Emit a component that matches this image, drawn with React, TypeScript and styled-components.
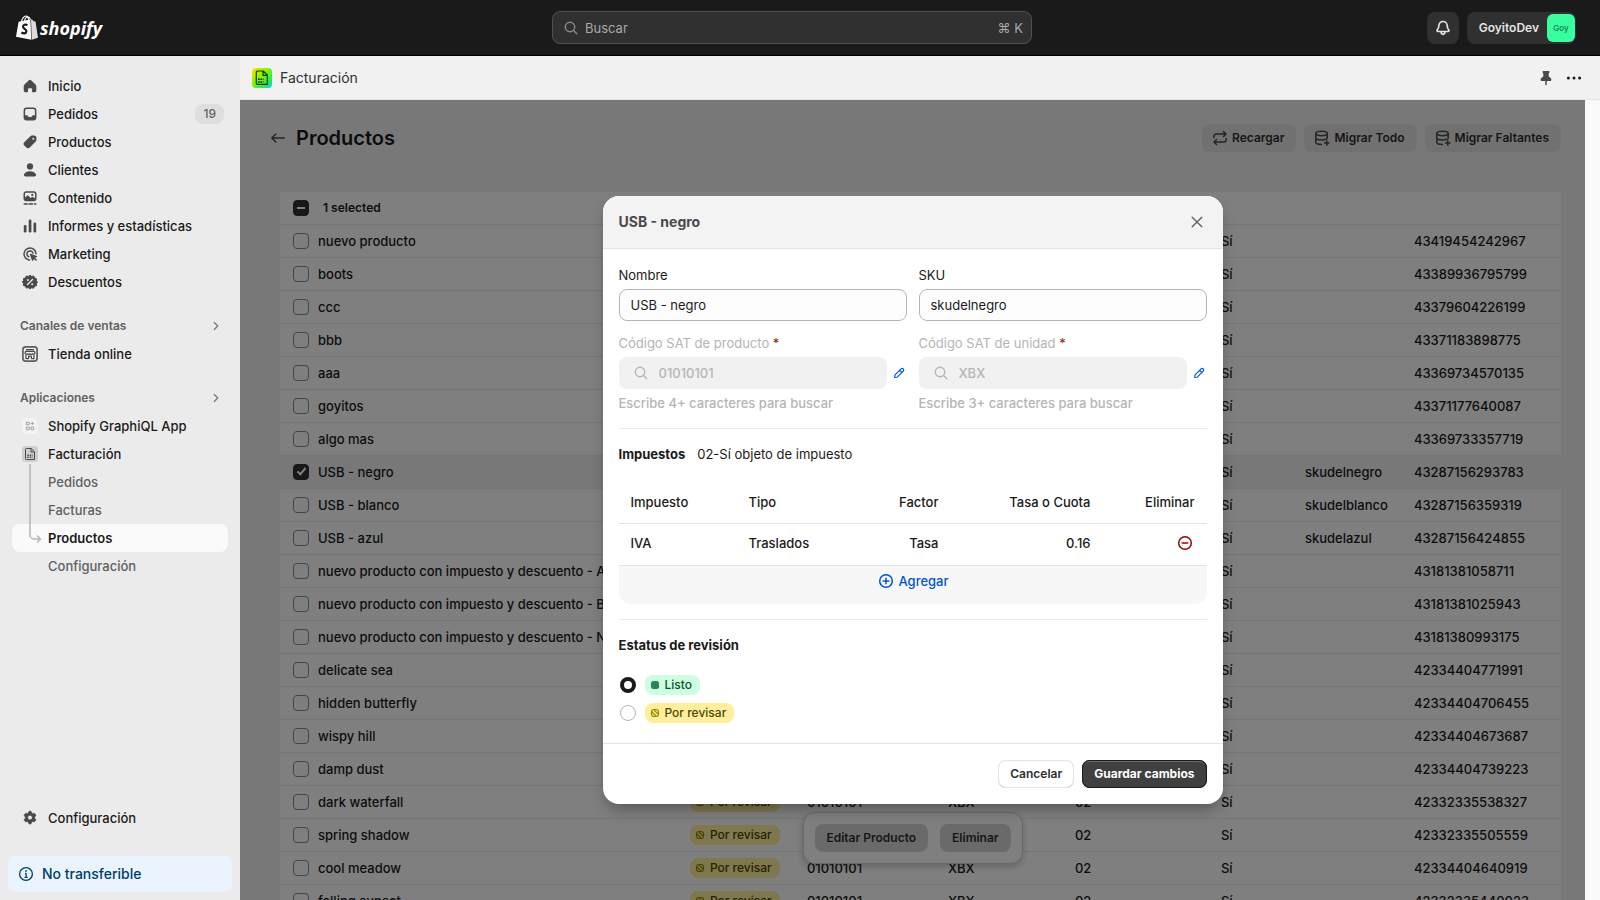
import React from "react";
import styled, { createGlobalStyle, css } from "styled-components";

const GlobalStyle = createGlobalStyle`
  *, *::before, *::after { box-sizing: border-box; }
  html, body, #root { height: 100%; }
  body {
    margin: 0;
    font-family: Inter, "Liberation Sans", sans-serif;
    font-size: 13px;
    line-height: 20px;
    color: #1a1a1a;
    background: #1a1a1a;
    overflow: hidden;
    -webkit-font-smoothing: antialiased;
  }
  button, input { font: inherit; color: inherit; }
  a { color: inherit; text-decoration: none; }
  h1, h2, h3, p { margin: 0; }
`;

/* ---------- Icons (20px grid) ---------- */

type IconName =
  | "home" | "orders" | "products" | "customers" | "content" | "analytics"
  | "marketing" | "discounts" | "settings" | "chevron" | "search" | "bell"
  | "pin" | "dots" | "back" | "refresh" | "database" | "close" | "pencil"
  | "plus" | "minus" | "info" | "store" | "apps" | "invoice";

const stroke = {
  fill: "none",
  stroke: "currentColor",
  strokeWidth: 1.5,
  strokeLinecap: "round" as const,
  strokeLinejoin: "round" as const,
};

const shapes: Record<IconName, React.ReactNode> = {
  home: (
    <path fill="currentColor" d="M8.900 4.300a1.600 1.600 0 0 1 2.200 0l4.200 3.900c.6.600 1 1.400 1 2.200v4.100c0 1-.8 1.800-1.800 1.800h-1.700a.7.700 0 0 1-.7-.7v-2.300a1 1 0 0 0-1-1H9a1 1 0 0 0-1 1v2.300c0 .4-.3.700-.7.700H5.500a1.800 1.800 0 0 1-1.800-1.800v-4.100c0-.8.400-1.600 1-2.200z" />
  ),
  orders: (
    <path fill="currentColor" fillRule="evenodd" d="M6.600 3.600h6.800a3 3 0 0 1 3 3v6.800a3 3 0 0 1-3 3H6.600a3 3 0 0 1-3-3V6.600a3 3 0 0 1 3-3zm0 1.500A1.500 1.500 0 0 0 5.100 6.600v4.700h1.700c.5 0 .9.200 1.100.6l.5.800c.1.200.4.400.7.400h1.800c.3 0 .6-.2.7-.4l.5-.8c.2-.4.6-.6 1.100-.6h1.700V6.600a1.500 1.500 0 0 0-1.500-1.500z" />
  ),
  products: (
    <path fill="currentColor" fillRule="evenodd" d="M10.400 4.300c.4-.4 1-.7 1.600-.7h2.200c1.200 0 2.200 1 2.200 2.200V8c0 .6-.2 1.200-.7 1.600l-5.900 6c-1 1-2.500 1-3.400 0L4.300 13.600c-1-1-1-2.400 0-3.400zM13.300 7.700a1 1 0 1 0 0-2 1 1 0 0 0 0 2z" />
  ),
  customers: (
    <path fill="currentColor" d="M10 9.500a3.100 3.100 0 1 0 0-6.200 3.100 3.100 0 0 0 0 6.200zM10 11.300c-2.700 0-5 1.200-5.900 2.900-.6 1.200.2 2.300 1.500 2.300h8.800c1.300 0 2.100-1.100 1.500-2.300-.9-1.700-3.200-2.900-5.900-2.900z" />
  ),
  content: (
    <>
      <path fill="currentColor" fillRule="evenodd" d="M6.200 3.200h7.600a2.700 2.700 0 0 1 2.700 2.700v4.700a2.700 2.700 0 0 1-2.700 2.700H6.200a2.700 2.700 0 0 1-2.700-2.700V5.900a2.700 2.700 0 0 1 2.700-2.700zm0 1.500A1.200 1.200 0 0 0 5 5.900v3.500l2-1.600c.4-.3.900-.3 1.300 0l2.500 2.200 1.100-.9c.3-.3.8-.3 1.200 0l1.900 1.300V5.900a1.200 1.200 0 0 0-1.200-1.200zM12.300 8a1.100 1.100 0 1 0 0-2.200 1.100 1.100 0 0 0 0 2.200z" />
      <path {...stroke} d="M4.200 16h3M9 16h3.500M14.500 16h1.300" />
    </>
  ),
  analytics: (
    <g fill="currentColor">
      <rect x="3.800" y="9" width="2.700" height="7.500" rx="1.200" />
      <rect x="8.700" y="3.500" width="2.700" height="13" rx="1.200" />
      <rect x="13.500" y="6.500" width="2.700" height="10" rx="1.200" />
    </g>
  ),
  marketing: (
    <>
      <path {...stroke} d="M9.500 16A6 6 0 1 1 16 9.700" />
      <path {...stroke} d="M8.700 12.800A3.100 3.100 0 1 1 13 9.100" />
      <path fill="currentColor" d="M9.900 10.600c-.2-.5.3-1 .8-.8l6 2.100c.6.200.6 1 0 1.200l-1.700.7 1.700 1.800a.7.700 0 0 1-1 1l-1.800-1.700-.7 1.700c-.2.600-1 .6-1.200 0z" />
    </>
  ),
  discounts: (
    <>
      <path fill="currentColor" stroke="currentColor" strokeLinejoin="round" d="M10 3.200l1.700 1.300 2-.5.8 2 2 .7-.2 2.100 1.300 1.200-1.200 1.600.1 2.100-2.100.6-.8 1.900-2-.5L10 16.900l-1.700-1.300-2 .5-.8-1.900-2.100-.6.1-2.100L2.400 10l1.200-1.400-.1-2 2-.6.8-2 2 .5z" />
      <path d="M7.500 12.500l5-5" stroke="#ebebeb" strokeWidth="1.400" strokeLinecap="round" />
      <circle cx="7.900" cy="8" r="1" fill="#ebebeb" />
      <circle cx="12.200" cy="12.200" r="1" fill="#ebebeb" />
    </>
  ),
  settings: (
    <path fill="currentColor" fillRule="evenodd" stroke="currentColor" strokeWidth=".8" strokeLinejoin="round" d="M8.600 4.100c.1-.6.5-.9 1-.9h.8c.5 0 .9.300 1 .9l.2 1 1.100.6 1-.3c.5-.2 1 0 1.300.5l.6 1c.3.400.2 1-.2 1.300l-.8.700v1.300l.8.700c.4.300.5.900.2 1.300l-.6 1c-.3.500-.8.700-1.300.5l-1-.3-1.100.6-.2 1c-.1.600-.5.900-1 .9h-.8c-.5 0-.9-.3-1-.9l-.2-1-1.100-.6-1 .3c-.5.200-1 0-1.300-.5l-.6-1c-.3-.4-.2-1 .2-1.300l.8-.7V8.900l-.8-.7c-.4-.3-.5-.9-.2-1.300l.6-1c.3-.5.8-.7 1.300-.5l1 .3 1.100-.6zM10 12a2.400 2.400 0 1 0 0-4.800A2.400 2.400 0 0 0 10 12z" />
  ),
  chevron: <path {...stroke} strokeWidth={1.300} d="M8.300 6.500l3.500 3.500-3.500 3.500" />,
  search: (
    <>
      <circle cx="9" cy="9" r="4.700" {...stroke} strokeWidth={1.400} />
      <path {...stroke} strokeWidth={1.400} d="M12.500 12.500l3.300 3.300" />
    </>
  ),
  bell: (
    <path {...stroke} strokeWidth={1.700} d="M10 3.500a4.200 4.200 0 0 0-4.200 4.200c0 2.300-.6 3.200-1.500 4.200-.6.700-.2 1.600.7 1.600h10c.9 0 1.300-.9.700-1.600-.9-1-1.500-1.900-1.500-4.200A4.200 4.200 0 0 0 10 3.500zM8 13.800c.1 1.700.9 2.500 2 2.500s1.900-.8 2-2.500" />
  ),
  pin: (
    <>
      <path fill="currentColor" d="M7.500 3h5c.6 0 1 .4 1 1s-.4 1.200-.8 1.500v3l2 1.600c.5.500.6 1 .6 1.800 0 .6-.4 1-1 1H5.700c-.6 0-1-.4-1-1 0-.8.1-1.300.6-1.800l2-1.600v-3C6.900 5.200 6.500 4.600 6.500 4s.4-1 1-1z" />
      <path {...stroke} d="M10 12.500v4" />
    </>
  ),
  dots: (
    <g fill="currentColor">
      <circle cx="4.400" cy="10" r="1.500" />
      <circle cx="10" cy="10" r="1.500" />
      <circle cx="15.600" cy="10" r="1.500" />
    </g>
  ),
  back: <path {...stroke} d="M16.200 10H4M7.800 6L3.800 10l4 4" />,
  refresh: (
    <>
      <path {...stroke} d="M3.800 9.500V8.500a2.500 2.500 0 0 1 2.500-2.500h9.500M13.500 3.500L16 6l-2.500 2.500" />
      <path {...stroke} d="M16.200 10.500v1a2.500 2.500 0 0 1-2.500 2.500H4.200M6.500 11.500L4 14l2.500 2.500" />
    </>
  ),
  database: (
    <>
      <ellipse cx="9.500" cy="5.500" rx="5.700" ry="2.200" {...stroke} />
      <path {...stroke} d="M3.800 5.500v8.700c0 1.200 2.400 2.200 5.500 2.200M15.200 5.500v5M3.800 9.800c0 1.200 2.500 2.200 5.700 2.200 2 0 3.600-.3 4.700-.9M14.800 12.800v4.400M12.600 15h4.400" />
    </>
  ),
  close: <path {...stroke} strokeWidth={1.400} d="M5.200 5.200l9.600 9.600M14.800 5.200l-9.600 9.600" />,
  pencil: (
    <path {...stroke} d="M12.600 4.900a1.900 1.900 0 0 1 2.700 2.700l-7.200 7.200c-.3.300-.6.400-1 .5l-2.500.3.300-2.500c0-.4.200-.7.500-1zM10.900 6.800l2.500 2.500" />
  ),
  plus: (
    <>
      <circle cx="10" cy="10" r="6.300" {...stroke} />
      <path {...stroke} d="M10 7.200v5.600M7.200 10h5.600" />
    </>
  ),
  minus: (
    <>
      <circle cx="10" cy="10" r="6.300" {...stroke} />
      <path {...stroke} d="M7.200 10h5.600" />
    </>
  ),
  info: (
    <>
      <circle cx="10" cy="10" r="6.400" {...stroke} strokeWidth={1.300} />
      <path {...stroke} strokeWidth={1.300} d="M9.500 9.300h.6v4M9 13.300h2.200" />
      <circle cx="10" cy="6.900" r=".9" fill="currentColor" />
    </>
  ),
  store: (
    <>
      <rect x="2.900" y="2.900" width="14.200" height="14.200" rx="2.800" fill="#f1f1f1" stroke="#5c5f62" strokeWidth="1.700" />
      <path fill="none" stroke="#4a4a4a" strokeWidth="1.200" strokeLinejoin="round" d="M6 5.600h8M5.500 7.300h9l.5 2c0 1-1.500 1.400-2.200.3-.7 1.100-2.100 1.100-2.800 0-.7 1.100-2.100 1.100-2.800 0-.7 1.100-2.200.7-2.200-.3zM6 11v3.600h2.600v-2.400h2.800v2.400H14V11" />
    </>
  ),
  apps: (
    <>
      <rect x="2" y="2" width="16" height="16" rx="4" fill="#f3f3f3" />
      <g fill="none" stroke="#a6a6a6" strokeWidth="1.100">
        <rect x="6.300" y="6.300" width="3" height="2.500" rx=".6" />
        <rect x="6.300" y="11" width="3" height="2.700" rx=".6" />
        <rect x="11" y="11" width="2.700" height="2.700" rx=".6" />
        <path d="M12.400 5.900v3.200M10.800 7.500H14" />
      </g>
    </>
  ),
  invoice: (
    <>
      <rect x="2" y="2" width="16" height="16" rx="3.500" fill="#cecece" />
      <path fill="none" stroke="#4a4a4a" strokeWidth="1" d="M6.300 4.500h4.900l3.300 3.300v7.700H6.300c-.5 0-.8-.3-.8-.8V5.300c0-.5.3-.8.8-.8zM11 4.500V8h3.500" />
      <path stroke="#4a4a4a" strokeWidth="1.400" strokeDasharray="1.500 1" d="M7.300 11.200h5.500M7.300 13.300h5.500" />
    </>
  ),
};

const Svg = styled.svg<{ $size: number }>`
  display: block;
  flex: none;
  width: ${(p) => p.$size}px;
  height: ${(p) => p.$size}px;
`;

const Icon = ({ name, size = 20 }: { name: IconName; size?: number }) => (
  <Svg viewBox="0 0 20 20" $size={size} aria-hidden="true">
    {shapes[name]}
  </Svg>
);

/* ---------- Shell ---------- */

const Shell = styled.div`
  display: flex;
  flex-direction: column;
  height: 100vh;
`;

const TopBar = styled.header`
  display: grid;
  grid-template-columns: 1fr minmax(200px, 480px) 1fr;
  align-items: center;
  flex: none;
  height: 56px;
  padding: 0 24px 0 8px;
  background: #1a1a1a;
  border-bottom: 1px solid #000;
`;

const Logo = styled.a`
  display: flex;
  align-items: center;
  gap: 2px;
  padding-left: 8px;
  color: #fff;
  font: italic 700 18px/24px "Open Sans", sans-serif;
`;

const LogoBag = styled.svg`
  width: 22px;
  height: 25px;
`;

const SearchButton = styled.button`
  display: flex;
  align-items: center;
  gap: 4px;
  height: 33px;
  padding: 0 8px;
  background: #303030;
  border: 1px solid #4f4f4f;
  border-radius: 8px;
  color: #a8a8a8;
  text-align: left;
  svg { color: #8a8a8a; }
  span:first-of-type { flex: 1; }
`;

const Account = styled.div`
  display: flex;
  justify-content: flex-end;
  gap: 8px;
`;

const DarkButton = styled.button<{ $square?: boolean }>`
  display: flex;
  align-items: center;
  justify-content: center;
  gap: 8px;
  height: 32px;
  width: ${(p) => (p.$square ? "32px" : "auto")};
  padding: ${(p) => (p.$square ? "0" : "0 1px 0 12px")};
  border: 0;
  border-radius: 8px;
  background: #303030;
  color: #e3e3e3;
  font-size: 12px;
  font-weight: 600;
`;

const Avatar = styled.span`
  display: grid;
  place-items: center;
  width: 28px;
  height: 28px;
  border-radius: 6px;
  background: #3afda0;
  color: #137a4b;
  font-size: 8px;
  font-weight: 500;
`;

const Workspace = styled.div`
  display: flex;
  flex: 1;
  min-height: 0;
`;

/* ---------- Sidebar ---------- */

const Sidebar = styled.nav`
  display: flex;
  flex-direction: column;
  flex: none;
  width: 240px;
  background: #ebebeb;
`;

const NavGroup = styled.div<{ $bottom?: boolean }>`
  padding: ${(p) => (p.$bottom ? "0 12px 24px" : "16px 12px 0")};
  margin-top: ${(p) => (p.$bottom ? "auto" : "0")};
`;

const NavLink = styled.a<{ $active?: boolean; $sub?: boolean }>`
  display: flex;
  align-items: center;
  gap: 8px;
  height: 28px;
  padding: 0 4px 0 ${(p) => (p.$sub ? "36px" : "8px")};
  border-radius: 8px;
  color: ${(p) => (p.$sub && !p.$active ? "#616161" : "#1a1a1a")};
  font-weight: ${(p) => (p.$active ? 600 : p.$sub ? 450 : 500)};
  ${(p) => p.$active && css`background: #fafafa;`}
  svg { color: #4a4a4a; }
`;

const Count = styled.span`
  margin-left: auto;
  padding: 0 8px;
  border-radius: 8px;
  background: #dedede;
  color: #616161;
  font-size: 12px;
`;

const SectionButton = styled.button`
  display: flex;
  align-items: center;
  justify-content: space-between;
  width: 100%;
  height: 28px;
  margin-top: 16px;
  padding: 0 2px 0 8px;
  border: 0;
  background: none;
  color: #616161;
  font-size: 12px;
  font-weight: 600;
  svg { color: #7a7a7a; }
`;

const SubNav = styled.div`
  position: relative;
`;

const Branch = styled.svg`
  position: absolute;
  left: 14px;
  top: -4px;
  width: 16px;
  height: 84px;
  z-index: 1;
  pointer-events: none;
`;

const Notice = styled.div`
  display: flex;
  align-items: center;
  gap: 6px;
  flex: none;
  height: 36px;
  margin: 0 8px 8px;
  padding: 0 8px;
  border-radius: 8px;
  background: #eaf4ff;
  color: #003d6b;
  font-size: 14px;
  font-weight: 500;
`;

/* ---------- Embedded app ---------- */

const AppArea = styled.div`
  display: flex;
  flex-direction: column;
  flex: 1;
  min-width: 0;
  background: #fafafa;
`;

const AppBar = styled.div`
  display: flex;
  align-items: center;
  gap: 8px;
  flex: none;
  height: 44px;
  padding: 0 16px 0 12px;
  background: #f1f1f1;
  border-bottom: 1px solid #e6e6e6;
  color: #303030;
  font-size: 14px;
`;

const AppBadge = styled.svg`
  width: 20px;
  height: 20px;
`;

const IconButton = styled.button<{ $push?: boolean; $small?: boolean; $tone?: string }>`
  display: grid;
  place-items: center;
  flex: none;
  width: ${(p) => (p.$small ? "16px" : "20px")};
  height: 20px;
  padding: 0;
  margin-left: ${(p) => (p.$push ? "auto" : "0")};
  border: 0;
  background: none;
  color: ${(p) => p.$tone || "#4a4a4a"};
`;

const Frame = styled.div`
  position: relative;
  display: grid;
  flex: 1;
  min-height: 0;
  margin-right: 15px;
  overflow: hidden;
`;

const Page = styled.main`
  padding: 24px 24px 0 28px;
  background: #f1f1f1;
  overflow: hidden;
`;

const PageHeader = styled.div`
  display: flex;
  align-items: center;
  gap: 8px;
  margin-bottom: 40px;
  h1 {
    flex: 1;
    font-size: 20px;
    line-height: 28px;
    font-weight: 600;
  }
`;

const Button = styled.button<{ $kind?: "plain" | "primary" }>`
  display: flex;
  align-items: center;
  gap: 2px;
  height: 28px;
  padding: 0 12px;
  border: 0;
  border-radius: 8px;
  background: #e3e3e3;
  color: #303030;
  font-size: 12px;
  font-weight: 600;
  svg { margin-left: -4px; color: #4a4a4a; }
  ${(p) =>
    p.$kind === "plain" &&
    css`
      background: #fff;
      box-shadow: inset 0 0 0 1px #e3e3e3, inset 0 -1px 0 #b5b5b5;
    `}
  ${(p) =>
    p.$kind === "primary" &&
    css`
      background: #404040;
      color: #fff;
      font-weight: 700;
      box-shadow: inset 0 0 0 1px #1a1a1a, inset 0 2px 0 #6a6a6a;
    `}
`;

const TableCard = styled.table`
  width: calc(100% - 12px);
  margin-left: 12px;
  border-collapse: collapse;
  table-layout: fixed;
  background: #fff;
  td, th {
    height: 33px;
    padding: 0 6px;
    border-top: 1px solid #ebebeb;
    text-align: left;
    font-weight: 450;
    white-space: nowrap;
  }
  thead th {
    height: 32px;
    border-top: 0;
    font-size: 12px;
    font-weight: 600;
  }
  thead th:last-child { padding-left: 11px; }
  td:first-child, th:first-child { padding: 0 0 0 13px; }
`;

const Row = styled.tr<{ $selected: boolean }>`
  background: ${(p) => (p.$selected ? "#f0f0f0" : "#fff")};
`;

const Check = styled.input`
  display: block;
  appearance: none;
  width: 16px;
  height: 16px;
  margin: 0;
  border: 1px solid #8a8a8a;
  border-radius: 4px;
  background: #fdfdfd;
  &:checked, &:indeterminate {
    border-color: #303030;
    background: #303030;
  }
  &:checked::after {
    content: "";
    display: block;
    width: 5px;
    height: 9px;
    margin: 1px 0 0 5px;
    border: solid #fff;
    border-width: 0 2px 2px 0;
    transform: rotate(40deg);
  }
  &:indeterminate::after {
    content: "";
    display: block;
    width: 8px;
    height: 2px;
    margin: 6px 3px;
    background: #fff;
  }
`;

const Badge = styled.span<{ $tone: "success" | "attention" }>`
  display: inline-flex;
  align-items: center;
  gap: 4px;
  height: 20px;
  padding: 0 8px 0 4px;
  border-radius: 8px;
  background: ${(p) => (p.$tone === "success" ? "#cdfee1" : "#ffef9d")};
  color: ${(p) => (p.$tone === "success" ? "#0c5132" : "#4f4700")};
  font-size: 12px;
  font-weight: 500;
  vertical-align: middle;
`;

const Pip = styled.svg`
  width: 12px;
  height: 12px;
`;

const Status = ({ done }: { done: boolean }) => (
  <Badge $tone={done ? "success" : "attention"}>
    <Pip viewBox="0 0 12 12" aria-hidden="true">
      {done ? (
        <rect x="2" y="2" width="8" height="8" rx="2.500" fill="#29845a" />
      ) : (
        <g fill="none" stroke="#998a00" strokeWidth="1.200">
          <rect x="2.500" y="2.500" width="7" height="7" rx="2.500" />
          <path d="M3 5l4 4M5 3l4 4" />
        </g>
      )}
    </Pip>
    {done ? "Listo" : "Por revisar"}
  </Badge>
);

const BulkBar = styled.div`
  position: absolute;
  left: 50%;
  bottom: 36px;
  transform: translateX(-50%);
  display: flex;
  gap: 12px;
  padding: 11px;
  border: 1px solid #d4d4d4;
  border-radius: 12px;
  background: #fff;
  box-shadow: 0 3px 6px rgba(0, 0, 0, 0.2);
  button { background: #d4d4d4; }
`;

/* ---------- Dialog ---------- */

const Backdrop = styled.div`
  position: absolute;
  inset: 0;
  display: grid;
  place-items: center;
  background: rgba(0, 0, 0, 0.5);
`;

const Dialog = styled.section`
  width: 620px;
  max-width: calc(100% - 32px);
  border-radius: 16px;
  background: #fff;
  overflow: hidden;
  box-shadow: 0 8px 16px -4px rgba(0, 0, 0, 0.35);
`;

const DialogHeader = styled.header`
  display: flex;
  align-items: center;
  justify-content: space-between;
  height: 53px;
  padding: 0 16px;
  background: #f3f3f3;
  border-bottom: 1px solid #e3e3e3;
  h2 {
    color: #4a4a4a;
    font-size: 14px;
    font-weight: 650;
  }
`;

const DialogBody = styled.div`
  padding: 16px 16px 20px;
`;

const Fields = styled.div`
  display: grid;
  grid-template-columns: 1fr 1fr;
  gap: 12px;
`;

const Field = styled.div<{ $disabled?: boolean }>`
  display: grid;
  grid-template-columns: 1fr auto;
  align-items: center;
  gap: 4px;
  color: ${(p) => (p.$disabled ? "#b5b5b5" : "#1a1a1a")};
  label, p { grid-column: 1 / -1; }
  p { font-weight: 500; }
  em { color: #8e1f0b; font-style: normal; }
`;

const TextBox = styled.input`
  grid-column: 1 / -1;
  width: 100%;
  height: 32px;
  padding: 0 11px;
  border: 1px solid #b5b5b5;
  border-radius: 8px;
  background: #fdfdfd;
`;

const SearchBox = styled.div`
  display: flex;
  align-items: center;
  gap: 8px;
  height: 32px;
  padding: 0 12px;
  border-radius: 8px;
  background: #f1f1f1;
  input {
    width: 100%;
    min-width: 0;
    padding: 0;
    border: 0;
    background: none;
    color: #b5b5b5;
    font-weight: 500;
  }
`;

const Divider = styled.hr`
  height: 1px;
  margin: 15px 0;
  border: 0;
  background: #ebebeb;
`;

const Heading = styled.h3`
  font-size: 13px;
  font-weight: 650;
`;

const Inline = styled.div`
  display: flex;
  gap: 12px;
`;

const TaxTable = styled.table`
  width: 100%;
  margin-top: 16px;
  border-collapse: separate;
  border-spacing: 0;
  table-layout: fixed;
  th, td {
    height: 44px;
    padding: 0 12px;
    border-bottom: 1px solid #e3e3e3;
    font-weight: 450;
    text-align: right;
  }
  tbody td {
    height: 42px;
    padding-bottom: 4px;
  }
  th:nth-child(-n + 2), td:nth-child(-n + 2) { text-align: left; }
  td button { margin-left: auto; }
  tfoot td {
    height: 38px;
    padding: 0 0 8px;
    border: 0;
    border-radius: 0 0 12px 12px;
    background: #f7f7f7;
  }
`;

const AddButton = styled.button`
  display: flex;
  gap: 2px;
  align-items: center;
  width: 100%;
  justify-content: center;
  padding: 0;
  border: 0;
  background: none;
  color: #0052d6;
`;

const Choices = styled.div`
  display: grid;
  gap: 8px;
  margin-top: 20px;
`;

const Choice = styled.label`
  display: flex;
  align-items: center;
  gap: 8px;
  height: 20px;
`;

const Radio = styled.input`
  appearance: none;
  width: 16px;
  height: 16px;
  margin: 0 1px;
  border: 1px solid #b5b5b5;
  border-radius: 50%;
  background: #fdfdfd;
  &:checked { border: 4px solid #1a1a1a; }
`;

const DialogFooter = styled.footer`
  display: flex;
  justify-content: flex-end;
  gap: 8px;
  padding: 16px;
  border-top: 1px solid #e3e3e3;
`;

/* ---------- Data ---------- */

const mainNav: [IconName, string, string?][] = [
  ["home", "Inicio"],
  ["orders", "Pedidos", "19"],
  ["products", "Productos"],
  ["customers", "Clientes"],
  ["content", "Contenido"],
  ["analytics", "Informes y estadísticas"],
  ["marketing", "Marketing"],
  ["discounts", "Descuentos"],
];

const products: [string, string, string?][] = [
  ["nuevo producto", "43419454242967"],
  ["boots", "43389936795799"],
  ["ccc", "43379604226199"],
  ["bbb", "43371183898775"],
  ["aaa", "43369734570135"],
  ["goyitos", "43371177640087"],
  ["algo mas", "43369733357719"],
  ["USB - negro", "43287156293783", "skudelnegro"],
  ["USB - blanco", "43287156359319", "skudelblanco"],
  ["USB - azul", "43287156424855", "skudelazul"],
  ["nuevo producto con impuesto y descuento - A", "43181381058711"],
  ["nuevo producto con impuesto y descuento - B", "43181381025943"],
  ["nuevo producto con impuesto y descuento - N", "43181380993175"],
  ["delicate sea", "42334404771991"],
  ["hidden butterfly", "42334404706455"],
  ["wispy hill", "42334404673687"],
  ["damp dust", "42334404739223"],
  ["dark waterfall", "42332335538327"],
  ["spring shadow", "42332335505559"],
  ["cool meadow", "42334404640919"],
  ["falling sunset", "42332335440023"],
];

const columnWidths = [117, 141, 127, 146, 84, 109, 153];

const SELECTED = "USB - negro";

const Column = styled.col<{ $width?: number }>`
  width: ${(p) => (p.$width ? `${p.$width}px` : "auto")};
`;

const ProductTable = () => (
  <TableCard>
    <colgroup>
      <Column $width={32} />
      <Column />
      {columnWidths.map((width) => (
        <Column key={width} $width={width} />
      ))}
    </colgroup>
    <thead>
      <tr>
        <th>
          <Check
            type="checkbox"
            aria-label="Seleccionar todo"
            ref={(el) => {
              if (el) el.indeterminate = true;
            }}
          />
        </th>
        <th colSpan={8}>1 selected</th>
      </tr>
    </thead>
    <tbody>
      {products.map(([name, id, sku]) => (
        <Row key={name} $selected={name === SELECTED}>
          <td>
            <Check type="checkbox" aria-label={name} defaultChecked={name === SELECTED} />
          </td>
          <td>{name}</td>
          <td><Status done={name === SELECTED} /></td>
          <td>01010101</td>
          <td>XBX</td>
          <td>02</td>
          <td>Sí</td>
          <td>{sku}</td>
          <td>{id}</td>
        </Row>
      ))}
    </tbody>
  </TableCard>
);

const CodeField = ({ id, label, value, hint }: { id: string; label: string; value: string; hint: string }) => (
  <Field $disabled>
    <label htmlFor={id}>{label} <em>*</em></label>
    <SearchBox>
      <Icon name="search" />
      <input id={id} defaultValue={value} disabled />
    </SearchBox>
    <IconButton type="button" $small $tone="#0052d6" aria-label={`Editar ${label}`}>
      <Icon name="pencil" size={16} />
    </IconButton>
    <p>{hint}</p>
  </Field>
);

const EditDialog = () => (
  <Backdrop>
    <Dialog role="dialog" aria-modal="true" aria-labelledby="dialog-title">
      <DialogHeader>
        <h2 id="dialog-title">USB - negro</h2>
        <IconButton type="button" $tone="#616161" aria-label="Cerrar">
          <Icon name="close" />
        </IconButton>
      </DialogHeader>
      <DialogBody>
        <Fields>
          <Field>
            <label htmlFor="name">Nombre</label>
            <TextBox id="name" defaultValue="USB - negro" />
          </Field>
          <Field>
            <label htmlFor="sku">SKU</label>
            <TextBox id="sku" defaultValue="skudelnegro" />
          </Field>
          <CodeField id="sat-product" label="Código SAT de producto" value="01010101" hint="Escribe 4+ caracteres para buscar" />
          <CodeField id="sat-unit" label="Código SAT de unidad" value="XBX" hint="Escribe 3+ caracteres para buscar" />
        </Fields>
        <Divider />
        <Inline>
          <Heading>Impuestos</Heading>
          <span>02-Sí objeto de impuesto</span>
        </Inline>
        <TaxTable>
          <colgroup>
            <Column $width={118} />
            <Column $width={114} />
            <Column $width={100} />
            <Column $width={152} />
            <Column />
          </colgroup>
          <thead>
            <tr>
              <th>Impuesto</th>
              <th>Tipo</th>
              <th>Factor</th>
              <th>Tasa o Cuota</th>
              <th>Eliminar</th>
            </tr>
          </thead>
          <tbody>
            <tr>
              <td>IVA</td>
              <td>Traslados</td>
              <td>Tasa</td>
              <td>0.16</td>
              <td>
                <IconButton type="button" $tone="#960505" aria-label="Eliminar impuesto">
                  <Icon name="minus" />
                </IconButton>
              </td>
            </tr>
          </tbody>
          <tfoot>
            <tr>
              <td colSpan={5}>
                <AddButton type="button">
                  <Icon name="plus" />
                  Agregar
                </AddButton>
              </td>
            </tr>
          </tfoot>
        </TaxTable>
        <Divider />
        <Heading>Estatus de revisión</Heading>
        <Choices>
          <Choice>
            <Radio type="radio" name="status" defaultChecked />
            <Status done />
          </Choice>
          <Choice>
            <Radio type="radio" name="status" />
            <Status done={false} />
          </Choice>
        </Choices>
      </DialogBody>
      <DialogFooter>
        <Button type="button" $kind="plain">Cancelar</Button>
        <Button type="button" $kind="primary">Guardar cambios</Button>
      </DialogFooter>
    </Dialog>
  </Backdrop>
);

export default function App() {
  return (
    <>
      <GlobalStyle />
      <Shell>
        <TopBar>
          <Logo href="#">
            <LogoBag viewBox="0 0 22 25" aria-hidden="true">
              <path fill="#fff" d="M2.600 6.800l11.800-2.400.9 20.300L0 21.800z" />
              <path fill="#dcdcdc" d="M15 4.400l1 .2 1.700 1.700 1.800.2L22 22.800l-6.200 1.900z" />
              <path fill="none" stroke="#fff" strokeWidth="1.100" d="M5.500 7c.4-3 2.300-6 4.400-6 1.800 0 2.600 2 2.700 4.600M8.500 6.400C8.800 3.700 10.200 2 12 2c1.200 0 2 1.200 2.300 2.800" />
              <path fill="none" stroke="#1a1a1a" strokeWidth="2.200" d="M11.500 10c-2.200-1-4.500-.2-4.500 1.700 0 2.200 3.600 2.300 3.400 4.800-.2 2.100-2.700 2.400-5 1" />
            </LogoBag>
            shopify
          </Logo>
          <SearchButton type="button">
            <Icon name="search" />
            <span>Buscar</span>
            <span>⌘ K</span>
          </SearchButton>
          <Account>
            <DarkButton type="button" $square aria-label="Notificaciones">
              <Icon name="bell" />
            </DarkButton>
            <DarkButton type="button">
              GoyitoDev
              <Avatar>Goy</Avatar>
            </DarkButton>
          </Account>
        </TopBar>

        <Workspace>
          <Sidebar>
            <NavGroup>
              {mainNav.map(([icon, label, count]) => (
                <NavLink key={label} href="#">
                  <Icon name={icon} />
                  {label}
                  {count && <Count>{count}</Count>}
                </NavLink>
              ))}
              <SectionButton type="button">
                Canales de ventas
                <Icon name="chevron" />
              </SectionButton>
              <NavLink href="#"><Icon name="store" />Tienda online</NavLink>
              <SectionButton type="button">
                Aplicaciones
                <Icon name="chevron" />
              </SectionButton>
              <NavLink href="#"><Icon name="apps" />Shopify GraphiQL App</NavLink>
              <NavLink href="#"><Icon name="invoice" />Facturación</NavLink>
              <SubNav>
                <Branch viewBox="0 0 16 84" aria-hidden="true">
                  <path fill="none" stroke="#b5b5b5" strokeWidth="1.500" strokeLinecap="round" strokeLinejoin="round" d="M4 0v71a4 4 0 0 0 4 4h6M11.500 72l3 3-3 3" />
                </Branch>
                <NavLink href="#" $sub>Pedidos</NavLink>
                <NavLink href="#" $sub>Facturas</NavLink>
                <NavLink href="#" $sub $active>Productos</NavLink>
                <NavLink href="#" $sub>Configuración</NavLink>
              </SubNav>
            </NavGroup>
            <NavGroup $bottom>
              <NavLink href="#"><Icon name="settings" />Configuración</NavLink>
            </NavGroup>
            <Notice>
              <Icon name="info" />
              No transferible
            </Notice>
          </Sidebar>

          <AppArea>
            <AppBar>
              <AppBadge viewBox="0 0 20 20" aria-hidden="true">
                <defs>
                  <linearGradient id="lime" x1="0" y1="0" x2="1" y2="1">
                    <stop offset="0" stopColor="#ffe600" />
                    <stop offset=".45" stopColor="#7df500" />
                    <stop offset=".75" stopColor="#2be85a" />
                    <stop offset="1" stopColor="#00d8e8" />
                  </linearGradient>
                </defs>
                <rect width="20" height="20" rx="4" fill="url(#lime)" />
                <path fill="none" stroke="#123d00" strokeWidth="1.200" d="M5.500 3h5.800l4 4v9.300H5.500c-.8 0-1.200-.4-1.200-1V4c0-.6.400-1 1.200-1zM11 3v4.300h4.300" />
                <path stroke="#123d00" strokeWidth="1.500" strokeDasharray="1.700 .7" d="M6 11.300h5.500M6 14h5.500" />
              </AppBadge>
              Facturación
              <IconButton type="button" $push aria-label="Fijar"><Icon name="pin" /></IconButton>
              <IconButton type="button" $tone="#1a1a1a" aria-label="Más acciones"><Icon name="dots" /></IconButton>
            </AppBar>
            <Frame>
              <Page>
                <PageHeader>
                  <IconButton type="button" aria-label="Volver"><Icon name="back" /></IconButton>
                  <h1>Productos</h1>
                  <Button type="button"><Icon name="refresh" />Recargar</Button>
                  <Button type="button"><Icon name="database" />Migrar Todo</Button>
                  <Button type="button"><Icon name="database" />Migrar Faltantes</Button>
                </PageHeader>
                <ProductTable />
              </Page>
              <BulkBar>
                <Button type="button">Editar Producto</Button>
                <Button type="button">Eliminar</Button>
              </BulkBar>
              <EditDialog />
            </Frame>
          </AppArea>
        </Workspace>
      </Shell>
    </>
  );
}
